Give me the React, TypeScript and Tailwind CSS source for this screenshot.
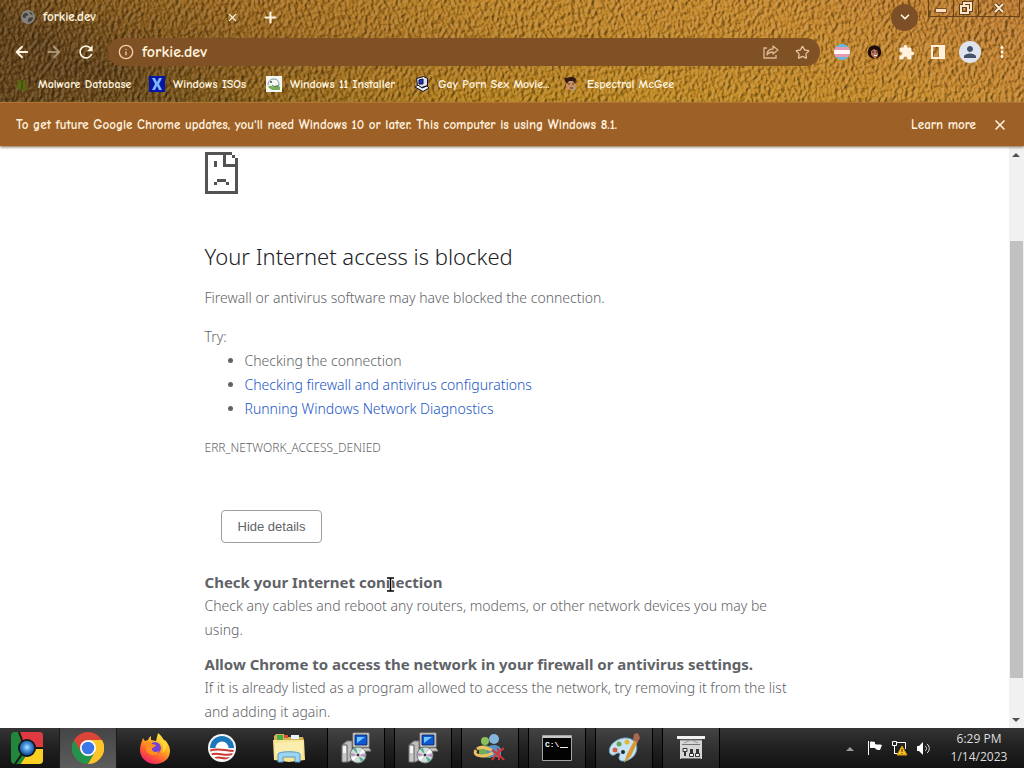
import type { ReactNode } from "react";
import { ArrowLeft, ArrowRight, ChevronDown, Info, Plus, Star, X } from "lucide-react";
import { MdExtension, MdMoreVert, MdPerson, MdRefresh } from "react-icons/md";

function Leather() {
  return (
    <svg className="absolute inset-0 -z-10 h-full w-full" aria-hidden="true">
      <defs>
        <linearGradient id="hide" x1="0" x2="1" y1="0.2" y2="0">
          <stop offset="0" stopColor="#64441a" />
          <stop offset="0.12" stopColor="#85591c" />
          <stop offset="0.28" stopColor="#a87223" />
          <stop offset="0.5" stopColor="#bf8629" />
          <stop offset="0.75" stopColor="#c88a2e" />
          <stop offset="1" stopColor="#bf7d33" />
        </linearGradient>
        <radialGradient id="glow" cx="0.5" cy="1" r="0.5">
          <stop offset="0" stopColor="#d09d18" stopOpacity="0.4" />
          <stop offset="1" stopColor="#d09d18" stopOpacity="0" />
        </radialGradient>
        <filter id="grain" x="0" y="0" width="1" height="1" colorInterpolationFilters="sRGB">
          <feTurbulence type="fractalNoise" baseFrequency="0.3 0.22" numOctaves="2" seed="7" />
          <feColorMatrix values="0 0 0 0 0  0 0 0 0 0  0 0 0 0 0  1 0 0 0 0" />
          <feDiffuseLighting surfaceScale="3" diffuseConstant="0.64" lightingColor="#fff">
            <feDistantLight azimuth="205" elevation="52" />
          </feDiffuseLighting>
        </filter>
      </defs>
      <rect width="100%" height="100%" fill="url(#hide)" />
      <rect width="100%" height="100%" fill="url(#glow)" />
      <rect width="100%" height="100%" filter="url(#grain)" className="opacity-50 mix-blend-hard-light" />
    </svg>
  );
}

function Globe() {
  return (
    <svg width="14" height="14" viewBox="0 0 14 14" className="shrink-0">
      <circle cx="7" cy="7" r="7" fill="#85827d" />
      <path d="M2 5c2-3 4-2 5-1s-1 2-2 2 1 2-1 2S1 7 2 5zM8 8c2-1 4-1 4 0s-2 4-4 4-1-3 0-4zM8 2c2 0 3 1 4 3-2 0-3-1-4-3z" fill="#41403c" />
    </svg>
  );
}

const bookmarks = [
  {
    name: "Malware Database",
    width: "w-[135px]",
    icon: (
      <g fill="#5b6512">
        <path d="M3 3l3 1 2 2 2-2 3-1-2 4 3 6-3 1-1 2-2-3-3 2-1-3-3 0 3-4z" />
        <path d="M7 5h2v9H7z" fill="#46540f" />
      </g>
    ),
  },
  {
    name: "Windows ISOs",
    width: "w-[117px]",
    icon: (
      <g>
        <path d="M0 0h16v16H0z" fill="#0717a5" />
        <path d="M3 2h3l2 4 2-4h3l-3 6 3 6h-3l-2-4-2 4H3l3-6z" fill="#7fb4ff" />
      </g>
    ),
  },
  {
    name: "Windows 11 Installer",
    width: "w-[148px]",
    icon: (
      <g>
        <path d="M0 0h16v16H0z" fill="#f4f6f2" />
        <path d="M2 9C2 5 5 3 8 3s5 2 5 6" fill="none" stroke="#799394" />
        <path d="M2 11c3-3 5 1 7-1s4 0 5 1v3H6z" fill="#77ad55" />
        <circle cx="5" cy="6" r="1" fill="#444" />
        <path d="M6 9c2 2 5 2 7 0" fill="none" stroke="#536e64" />
      </g>
    ),
  },
  {
    name: "Gay Porn Sex Movie...",
    width: "w-[149px]",
    icon: (
      <g stroke="#10102a" strokeLinejoin="round">
        <path d="M2.500 2.500l7-2 4 2v7l-6 2-4-2z" fill="#dfe2ee" />
        <path d="M5 4l4-1v5L5 8z" fill="#1936c7" />
        <path d="M1 11l3-2 4 3 5-2 2 2-6 3.500z" fill="#eef0f4" />
      </g>
    ),
  },
  {
    name: "Espectral McGee",
    width: "w-[120px]",
    icon: (
      <g>
        <path d="M3 5h9v4c0 3-2 5-4 5s-5-2-5-5z" fill="#c98f65" />
        <path d="M1 2c4 0 5-1 7-1s5 0 5 3l-1 4-2-3-4 0-2 3-2-3z" fill="#321a12" />
        <path d="M5 8h2M9 8h2M7 12h3" stroke="#59352a" />
        <path d="M12 10l1 2-3 3z" fill="#98acb4" />
      </g>
    ),
  },
];

function Header() {
  return (
    <header className="relative isolate h-[102px] shrink-0 overflow-hidden font-['Comic_Sans_MS','Comic_Neue',Lato,cursive] text-[#fff3df]">
      <Leather />
      <div className="flex h-[34px] items-center">
        <div role="tab" aria-selected="true" className="flex w-[241px] shrink-0 items-center pl-[21px]">
          <Globe />
          <span className="ml-2 flex-1 text-[13px] font-bold">forkie.dev</span>
          <button aria-label="Close tab" className="flex size-[18px] items-center justify-center">
            <X size={13} />
          </button>
        </div>
        <button aria-label="New tab" className="ml-5 flex size-[18px] items-center justify-center">
          <Plus size={17} strokeWidth={3} />
        </button>
        <button aria-label="Search tabs" className="mr-[10px] ml-auto flex size-[27px] items-center justify-center rounded-full bg-[#7d4f27]">
          <ChevronDown size={14} strokeWidth={3} />
        </button>
        <div className="mr-1 flex h-[17px] self-start border border-t-0 border-[#6c4319] text-[#ffe3c2]">
          <button aria-label="Minimize" className="flex w-[25px] items-end justify-center border-r border-[#6c4319] pb-[3px]">
            <svg width="12" height="5" viewBox="0 0 12 5"><path d="M.500 .500h11v4H.500z" fill="#ffe0bf" stroke="#80502b" /></svg>
          </button>
          <button aria-label="Restore" className="flex w-[25px] items-center justify-center border-r border-[#6c4319]">
            <svg width="14" height="14" viewBox="0 0 14 14" fill="none">
              <path d="M5 4V2h7v7h-3M2 5h7v7H2z" stroke="#60401f" strokeWidth="4" />
              <path d="M5 4V2h7v7h-3M2 5h7v7H2z" stroke="#ffe5c8" strokeWidth="2" />
              <path d="M5 8h1" stroke="#ffe5c8" />
            </svg>
          </button>
          <button aria-label="Close" className="flex w-[40px] items-center justify-center">
            <svg width="12" height="12" viewBox="0 0 12 12" fill="none">
              <path d="M2 2l8 8M10 2l-8 8" stroke="#60401f" strokeWidth="4" />
              <path d="M2 2l8 8M10 2l-8 8" stroke="#ffe8cc" strokeWidth="2" />
            </svg>
          </button>
        </div>
      </div>

      <div className="flex h-9 items-center pl-3">
        <button aria-label="Back" className="flex w-5 justify-center"><ArrowLeft size={18} strokeWidth={2.500} /></button>
        <button aria-label="Forward" className="ml-3 flex w-5 justify-center opacity-45"><ArrowRight size={18} strokeWidth={2.500} /></button>
        <button aria-label="Reload" className="ml-3 flex w-5 justify-center"><MdRefresh size={20} /></button>
        <div className="ml-3 flex h-7 flex-1 items-center rounded-full bg-[#815126] px-[10px]">
          <Info size={16} strokeWidth={2} className="shrink-0 text-[#f5cfaa]" />
          <input
            aria-label="Address"
            defaultValue="forkie.dev"
            className="ml-2 min-w-0 flex-1 bg-transparent text-base font-bold outline-none"
          />
          <button aria-label="Share" className="mr-4">
            <svg width="16" height="16" viewBox="0 0 16 16" fill="none" stroke="#dcb895" strokeWidth="1.300">
              <path d="M4 4H1v10h12v-3" />
              <path d="M10 2l5 4-5 4V8C7 8 5 9 4 11c0-4 2-6 6-6z" strokeLinejoin="round" />
            </svg>
          </button>
          <button aria-label="Bookmark this tab">
            <Star size={15} className="text-[#e8c7a4]" />
          </button>
        </div>
        <div className="ml-[14px] flex items-center">
          <button aria-label="Flag extension">
            <svg width="16" height="16" viewBox="0 0 16 16">
              <clipPath id="disc"><circle cx="8" cy="8" r="8" /></clipPath>
              <g clipPath="url(#disc)">
                <path d="M0 0h16v16H0z" fill="#62b9dc" />
                <path d="M0 3h16v10H0z" fill="#e59bb0" />
                <path d="M0 6h16v4H0z" fill="#fff8f6" />
              </g>
            </svg>
          </button>
          <button aria-label="Portrait extension" className="ml-[17px]">
            <svg width="15" height="15" viewBox="0 0 15 15">
              <circle cx="7.500" cy="7" r="6.800" fill="#1b0d0b" />
              <path d="M4 6l3-2 4 2v5l-3 3-4-4z" fill="#b87457" />
              <path d="M5 7h2M9 7h2" stroke="#3b1b15" />
              <path d="M7 10.500h3" stroke="#fff0e0" />
            </svg>
          </button>
          <button aria-label="Extensions" className="ml-4"><MdExtension size={17} /></button>
          <button aria-label="Side panel" className="ml-4">
            <svg width="14" height="14" viewBox="0 0 14 14">
              <path fillRule="evenodd" d="M0 0h14v14H0zM2 2v10h6V2z" fill="#fff0dc" />
            </svg>
          </button>
          <button aria-label="Profile" className="ml-[14px] flex size-[22px] items-center justify-center overflow-hidden rounded-full bg-[#dee3ee] text-[#455169]">
            <MdPerson size={18} />
          </button>
          <button aria-label="Menu" className="mr-[13px] ml-3"><MdMoreVert size={18} /></button>
        </div>
      </div>

      <nav aria-label="Bookmarks" className="flex h-7 items-center pl-[14px]">
        {bookmarks.map((bookmark) => (
          <a key={bookmark.name} href="#" className={`flex shrink-0 items-center ${bookmark.width}`}>
            <svg width="16" height="16" viewBox="0 0 16 16" className="shrink-0">{bookmark.icon}</svg>
            <span className="ml-2 text-xs font-bold whitespace-nowrap">{bookmark.name}</span>
          </a>
        ))}
      </nav>
    </header>
  );
}

function UpdateBar() {
  return (
    <div className="z-10 flex h-11 shrink-0 items-center border-t border-[#b3742f] bg-[#9d6026] px-4 font-['Comic_Sans_MS','Comic_Neue',Lato,cursive] text-[13px] font-bold text-[#fff1df] shadow-sm shadow-[#8a7a5a]">
      <p className="flex-1">
        To get future Google Chrome updates, you'll need Windows 10 or later. This computer is using Windows 8.1.
      </p>
      <a href="#">Learn more</a>
      <button aria-label="Dismiss" className="ml-4"><X size={16} strokeWidth={2.500} /></button>
    </div>
  );
}

function ErrorPage() {
  return (
    <main className="h-full flex-1 overflow-hidden font-['Segoe_UI','Noto_Sans',sans-serif] text-sm leading-6 font-light text-[#5f6368]">
      <div className="mx-auto max-w-[600px] pt-[6px]">
        <svg width="33" height="42" viewBox="0 0 11 14" shapeRendering="crispEdges" fill="#535353">
          <path d="M0 0h9v1H7v3h4v10H0zM1 1v12h9V5H6V1z" fillRule="evenodd" />
          <path d="M9 1h1v1H9zM10 2h1v3h-1zM3 3h1v2H3zM4 9h3v1H4zM3 10h1v1H3zM7 10h1v1H7z" />
        </svg>
        <h1 className="mt-[47px] text-[22px] leading-[30px] text-[#202124]">Your Internet access is blocked</h1>
        <p className="mt-[15px]">Firewall or antivirus software may have blocked the connection.</p>
        <p className="mt-[15px]">Try:</p>
        <ul className="list-disc pl-10">
          <li>Checking the connection</li>
          <li><a href="#" className="text-[#1a56c8]">Checking firewall and antivirus configurations</a></li>
          <li><a href="#" className="text-[#1a56c8]">Running Windows Network Diagnostics</a></li>
        </ul>
        <p className="mt-[15px] text-xs leading-6">ERR_NETWORK_ACCESS_DENIED</p>
        <button className="mt-[50px] ml-4 block h-[33px] rounded border border-[#9aa0a6] px-4 font-['Liberation_Sans',Arial,sans-serif] text-[13px] font-normal">
          Hide details
        </button>
        <section className="mt-[27px]">
          <h2 className="text-[15px] leading-6 font-bold">
            Check your Internet con
            <span className="relative">
              n
              <svg className="absolute top-1 left-0" width="9" height="17" viewBox="0 0 9 17" fill="none">
                <path d="M1 2h7M1 15h7M4.500 2v13" stroke="#fff" strokeWidth="3" />
                <path d="M1 2h7M1 15h7M4.500 2v13" stroke="#000" strokeWidth="1.500" />
              </svg>
            </span>
            ection
          </h2>
          <p>Check any cables and reboot any routers, modems, or other network devices you may be using.</p>
        </section>
        <section className="mt-[10px]">
          <h2 className="text-[15px] leading-6 font-bold">Allow Chrome to access the network in your firewall or antivirus settings.</h2>
          <p>If it is already listed as a program allowed to access the network, try removing it from the list and adding it again.</p>
        </section>
      </div>
    </main>
  );
}

function Scrollbar() {
  return (
    <div className="flex w-[15px] shrink-0 flex-col items-center bg-[#f1f1f1]" aria-hidden="true">
      <svg width="15" height="17" viewBox="0 0 15 17"><path d="M3 11l4-4 4 4z" fill="#505050" /></svg>
      <div className="flex w-full flex-1 flex-col items-center px-px">
        <div className="flex-[78]" />
        <div className="w-full flex-[437] bg-[#c1c1c1]" />
        <div className="flex-[33]" />
      </div>
      <svg width="15" height="17" viewBox="0 0 15 17"><path d="M3 7l4 4 4-4z" fill="#505050" /></svg>
    </div>
  );
}

const ChromeIcon = () => (
  <svg width="32" height="32" viewBox="0 0 32 32">
    <circle cx="16" cy="16" r="16" fill="#db4437" />
    <path d="M2.100 8A16 16 0 0 0 16 32l7-12-7 3-7-3z" fill="#22954c" />
    <path d="M16 32A16 16 0 0 0 30 8H16l7 12z" fill="#fcc629" />
    <circle cx="16" cy="16" r="8" fill="#fff" />
    <circle cx="16" cy="16" r="6.300" fill="#3b78e7" />
  </svg>
);

const StartIcon = () => (
  <svg width="34" height="34" viewBox="0 0 34 34">
    <defs>
      <radialGradient id="orb" cx="0.5" cy="0.45" r="0.6">
        <stop offset="0" stopColor="#b8e5ff" />
        <stop offset="0.4" stopColor="#4d9be5" />
        <stop offset="1" stopColor="#0a377b" />
      </radialGradient>
      <clipPath id="tile"><rect x="1" y="1" width="32" height="32" rx="4" /></clipPath>
    </defs>
    <g clipPath="url(#tile)">
      <path d="M0 0h34v34H0z" fill="#22873b" />
      <path d="M9 0h25v16H22l-5-5-6 2z" fill="#dd3a42" />
      <path d="M34 16v18H10l6-9 6-6z" fill="#f9cf23" />
      <path d="M9 1l4 11M12 23L5 33M23 17h11" stroke="#18190f" strokeWidth="2" />
    </g>
    <circle cx="17" cy="17" r="9" fill="#10151d" />
    <circle cx="17" cy="17" r="7.300" fill="url(#orb)" />
  </svg>
);

const FirefoxIcon = () => (
  <svg width="32" height="32" viewBox="0 0 32 32">
    <defs>
      <linearGradient id="fox" x1="0.8" y1="0" x2="0.2" y2="1">
        <stop offset="0" stopColor="#fff14f" />
        <stop offset="0.4" stopColor="#ffae22" />
        <stop offset="0.7" stopColor="#ff5a34" />
        <stop offset="1" stopColor="#ed1679" />
      </linearGradient>
    </defs>
    <path d="M4 6l2 3 3-1c1-3 3-4 3-4v4l5 1 2-8c3 2 5 5 6 8l1-1c3 3 5 7 5 11 0 8-7 13-15 13S1 26 1 18C1 13 3 9 4 6z" fill="url(#fox)" />
    <circle cx="16" cy="16" r="6" fill="#7542d5" />
    <path d="M7 10c3-1 5 0 6 2l4 1c0 2-4 2-4 4 0 3 4 4 7 2-2 6-12 5-13-2z" fill="#ff9020" />
    <path d="M17 9c7 0 9 7 6 12 6-3 5-11 1-14z" fill="#ffd633" />
  </svg>
);

const ObamaIcon = () => (
  <svg width="28" height="28" viewBox="0 0 28 28">
    <clipPath id="round"><circle cx="14" cy="14" r="12" /></clipPath>
    <circle cx="14" cy="14" r="14" fill="#f5f5f5" />
    <g clipPath="url(#round)" fill="none">
      <path d="M0 0h28v14H0z" fill="#1977ba" />
      <circle cx="14" cy="14" r="6.500" fill="#fff" />
      <path d="M0 16c9-4 18-1 28 2v12H0z" fill="#fff" />
      <path d="M1 17c8-4 16 0 26 0M2 21c8-4 13 2 23-1M5 25c6-4 10 1 17-1" stroke="#cb3b32" strokeWidth="2" />
    </g>
  </svg>
);

const ExplorerIcon = () => (
  <svg width="34" height="32" viewBox="0 0 34 32">
    <path d="M2 4l2-2h8l2 3h17l1 3v19H2z" fill="#d4b153" />
    <path d="M5 3h6v5H5z" fill="#49ac4b" />
    <path d="M19 3h8v4h-8z" fill="#e8f4ff" />
    <path d="M12 3h4v3h-4z" fill="#dd5038" />
    <path d="M1 8h31l1 20-16 2-15-2z" fill="#f7e392" />
    <path d="M3 11l28-2v14H3z" fill="#fbedae" />
    <path d="M6 30V22c0-3 22-3 22 0v8h-5v-5H11v5z" fill="#9dd4f0" stroke="#529cc8" />
  </svg>
);

const InstallerIcon = () => (
  <svg width="32" height="32" viewBox="0 0 32 32">
    <path d="M13 1h16v14H13z" fill="#e4e2d8" stroke="#8b8b88" />
    <path d="M15 3h12v10H15z" fill="#0d59d3" stroke="#102870" />
    <path d="M17 5h8l-8 6z" fill="#72c4ff" />
    <path d="M13 16h16l2 3H16z" fill="#d2d0c6" stroke="#888" />
    <path d="M2 13l5-4h5v19l-4 2H2z" fill="#bdbdbd" stroke="#777" />
    <path d="M2 13h5v17H2z" fill="#f4f4f4" stroke="#555" />
    <path d="M3 22h3M3 24h3M3 26h3M3 28h3" stroke="#999" />
    <circle cx="18" cy="23" r="8" fill="#d5dcd8" stroke="#737d78" />
    <path d="M18 23l-5-6 3-1zM18 23l6 5-3 2z" fill="#4fb39b" />
    <path d="M18 23l5-6 2 3zM18 23l-5 6-2-3z" fill="#fff" />
    <path d="M18 23l-7-2v3zM18 23l7-1v3z" fill="#ba8ac5" />
    <circle cx="18" cy="23" r="2" fill="#333" stroke="#eee" />
  </svg>
);

const MessengerIcon = () => (
  <svg width="34" height="30" viewBox="0 0 34 30">
    <circle cx="12" cy="8" r="4" fill="#8cc05e" />
    <circle cx="21" cy="6" r="5" fill="#84b6dd" />
    <path d="M6 24V16c0-5 11-5 12 0v9z" fill="#6fae52" />
    <path d="M14 24v-8c1-6 14-5 14 1v7z" fill="#5492c2" />
    <path d="M3 17c-4 6 7 8 17 3M4 16c5-4 10 0 15 1" fill="none" stroke="#f0c062" strokeWidth="3" />
    <path d="M19 17c4 3 9 6 12 10M31 15c-5 4-9 7-12 12M25 15l1 12" fill="none" stroke="#d7353a" strokeWidth="2" />
  </svg>
);

const TerminalIcon = () => (
  <svg width="30" height="26" viewBox="0 0 30 26">
    <path d="M.5.500h29v25H.5z" fill="#030303" stroke="#a5a5a5" />
    <path d="M1 1h28v2H1z" fill="#c8c8c8" />
    <text x="3" y="12" fill="#fff" className="font-['Liberation_Mono',monospace] text-[8px] font-bold">C:\</text>
    <path d="M18 12.500h8" stroke="#eee" />
  </svg>
);

const PaintIcon = () => (
  <svg width="32" height="32" viewBox="0 0 32 32">
    <path d="M16 6c9-1 15 6 12 14-3 9-17 12-17 6 0-3 3-5-1-5-2 0-3 3-6 2C-2 21 2 8 16 6z" fill="#c8e3f3" stroke="#71a4bd" />
    <circle cx="7" cy="18" r="2.500" fill="#ce6045" />
    <circle cx="11" cy="12" r="2.500" fill="#64a551" />
    <circle cx="19" cy="10" r="2.500" fill="#e1b83e" />
    <circle cx="15" cy="20" r="2" fill="#1a2730" />
    <path d="M16 31l3-9 8-15 3 2-7 15z" fill="#d89a35" />
    <path d="M25 7l1-5 4-1 2 5-3 5z" fill="#aa6850" />
  </svg>
);

const BoardIcon = () => (
  <svg width="30" height="24" viewBox="0 0 30 24">
    <path d="M4 4h22v19H4z" fill="#d6d6d6" />
    <path d="M1 0h28v3H1z" fill="#f2f2f2" />
    <path d="M4 4h22M6 8.500h18M5 22.500h20" stroke="#777" />
    <path d="M8 7l7-3 7 3" fill="none" stroke="#999" />
    <path d="M7 12.500h4v3H7zM13.500 17.500h4v3h-4zM19.500 17.500h4v3h-4z" fill="#eee" stroke="#333" />
    <path d="M8 16h2v4H8zM14 13h3v4h-3zM20 13h3v4h-3z" fill="#333" />
  </svg>
);

const apps: { name: string; icon: ReactNode; state: string }[] = [
  { name: "Chrome", icon: <ChromeIcon />, state: "border-x border-[#191919] bg-linear-to-b from-[#454545] to-[#5c5c5c]" },
  { name: "Firefox", icon: <FirefoxIcon />, state: "" },
  { name: "Campaign", icon: <ObamaIcon />, state: "" },
  { name: "File Explorer", icon: <ExplorerIcon />, state: "" },
  { name: "Installer", icon: <InstallerIcon />, state: "border-x border-black bg-white/8" },
  { name: "Second installer", icon: <InstallerIcon />, state: "border-x border-black bg-white/8" },
  { name: "Messenger", icon: <MessengerIcon />, state: "border-x border-black bg-white/8" },
  { name: "Command Prompt", icon: <TerminalIcon />, state: "border-x border-black bg-white/8" },
  { name: "Paint", icon: <PaintIcon />, state: "border-x border-black bg-white/8" },
  { name: "Control board", icon: <BoardIcon />, state: "border-x border-black bg-white/8" },
];

function Taskbar() {
  return (
    <footer className="flex h-10 shrink-0 bg-linear-to-b from-[#343434] via-[#202020] to-[#121212] font-['Segoe_UI','Open_Sans',sans-serif] text-[#dedede]">
      <button aria-label="Start" className="flex w-[54px] items-center justify-center"><StartIcon /></button>
      <div className="ml-[5px] flex gap-[9px]">
        {apps.map((app) => (
          <button key={app.name} aria-label={app.name} className={`flex w-[58px] items-center justify-center ${app.state}`}>
            {app.icon}
          </button>
        ))}
      </div>
      <div className="ml-auto flex items-center">
        <button aria-label="Show hidden icons" className="mr-3">
          <svg width="8" height="5" viewBox="0 0 8 5"><path d="M0 5l4-4 4 4z" fill="#999" /></svg>
        </button>
        <button aria-label="Action Center" className="mr-2">
          <svg width="17" height="16" viewBox="0 0 17 16" fill="#fff"><path d="M2 1h1v14H2zM4 2c2-1 3 0 5 0v2c2 1 4 0 7 1l-2 5c-2 0-4 0-5-2H4z" /></svg>
        </button>
        <button aria-label="Network" className="mr-2">
          <svg width="17" height="16" viewBox="0 0 17 16" fill="none" stroke="#fff">
            <path d="M6 2.500h8.500V9M1.500 1.500h4v4h-4zM3.500 5v8M3 13.500h4" />
            <path d="M11 6l5 9H6z" fill="#f6bf23" stroke="#d99908" />
            <path d="M11 9v3M11 13v1" stroke="#3b2d00" />
          </svg>
        </button>
        <button aria-label="Volume">
          <svg width="16" height="15" viewBox="0 0 16 15" fill="#fff">
            <path d="M1 5h2l4-4v13l-4-4H1z" />
            <path d="M9 5c2 1 2 4 0 5M11 3c3 2 3 7 0 9" fill="none" stroke="#ddd" />
          </svg>
        </button>
        <time className="ml-3 w-[70px] text-center text-xs leading-[18px]">6:29 PM<br />1/14/2023</time>
        <span className="w-[10px]" />
      </div>
    </footer>
  );
}

export default function App() {
  return (
    <div className="flex h-screen flex-col overflow-hidden bg-white">
      <Header />
      <UpdateBar />
      <div className="flex min-h-0 flex-1">
        <ErrorPage />
        <Scrollbar />
      </div>
      <Taskbar />
    </div>
  );
}
